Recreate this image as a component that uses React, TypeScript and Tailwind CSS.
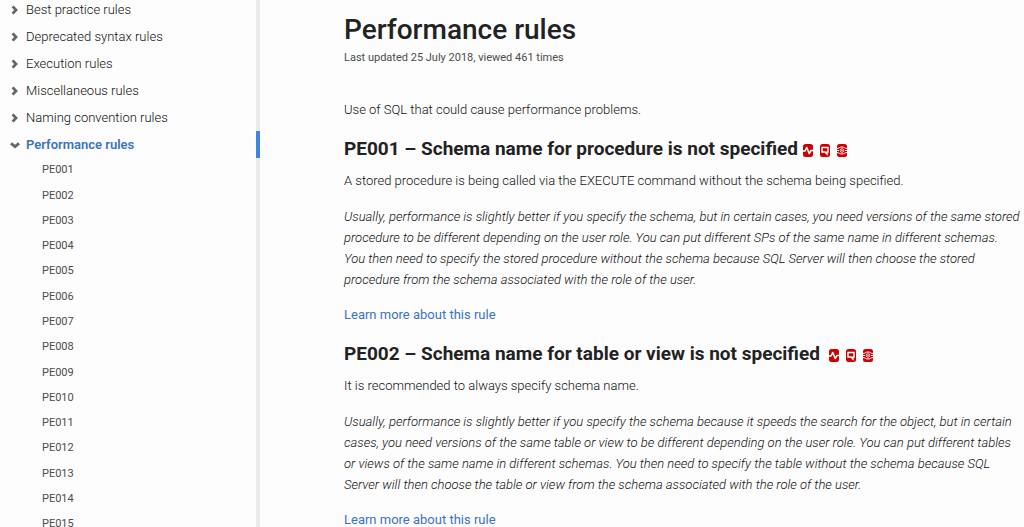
import React from 'react';

const collapsedGroups = [
  'Best practice rules',
  'Deprecated syntax rules',
  'Execution rules',
  'Miscellaneous rules',
  'Naming convention rules',
];

const ruleCodes = Array.from({ length: 15 }, (_, i) => 'PE' + String(i + 1).padStart(3, '0'));

const rules = [
  {
    title: 'PE001 – Schema name for procedure is not specified',
    summary: 'A stored procedure is being called via the EXECUTE command without the schema being specified.',
    detail:
      'Usually, performance is slightly better if you specify the schema, but in certain cases, you need versions of the same stored procedure to be different depending on the user role. You can put different SPs of the same name in different schemas. You then need to specify the stored procedure without the schema because SQL Server will then choose the stored procedure from the schema associated with the role of the user.',
    gap: 'ml-[5px]',
  },
  {
    title: 'PE002 – Schema name for table or view is not specified',
    summary: 'It is recommended to always specify schema name.',
    detail:
      'Usually, performance is slightly better if you specify the schema because it speeds the search for the object, but in certain cases, you need versions of the same table or view to be different depending on the user role. You can put different tables or views of the same name in different schemas. You then need to specify the table without the schema because SQL Server will then choose the table or view from the schema associated with the role of the user.',
    gap: 'ml-[9px]',
  },
];

function Chevron({ open }: { open?: boolean }) {
  return (
    <svg
      viewBox="0 0 10 10"
      className={open ? 'size-2.5 shrink-0 rotate-90' : 'size-2.5 shrink-0'}
      fill="none"
      stroke="#666"
      strokeWidth="2.8"
      aria-hidden="true"
    >
      <path d={open ? 'M3.4 1 6.6 5 3.4 9' : 'M2.6 1.4 6 5 2.6 8.6'} />
    </svg>
  );
}

function Tile({ children }: { children: React.ReactNode }) {
  return (
    <svg viewBox="0 0 20 26" className="h-[13px] w-2.5" fill="none" stroke="#fff" aria-hidden="true">
      <rect width="20" height="26" rx="5" fill="#cc0000" stroke="none" />
      {children}
    </svg>
  );
}

function ProductIcons() {
  return (
    <>
      <Tile>
        <path d="M0 14h4L7.5 7l5 12 3.5-6h4" strokeWidth="3.2" strokeLinejoin="round" />
      </Tile>
      <Tile>
        <path d="M4 7h12v9h-2v4l-4-4H4z" strokeWidth="2.8" />
      </Tile>
      <Tile>
        <path d="M0 9c4 0 5-3 10-3s6 3 10 3M0 17c4 0 5 3 10 3s6-3 10-3" strokeWidth="2" />
        <circle cx="10" cy="13" r="3.6" strokeWidth="1.6" />
        <path d="M0 13h4M16 13h4" strokeWidth="1.8" />
        <circle cx="10" cy="13" r="1.4" fill="#fff" stroke="none" />
      </Tile>
    </>
  );
}

export default function App() {
  return (
    <div className="flex h-screen overflow-hidden bg-[#fdfdfd] font-[Roboto,sans-serif] text-[13px] font-light text-[#111]">
      <nav aria-label="Rules" className="w-[260px] shrink-0 overflow-hidden">
        <div className="-mt-1">
          {collapsedGroups.map((name) => (
            <a
              key={name}
              href="#"
              className="flex h-[27px] items-center gap-1.5 border-r-4 border-[#ebebeb] pl-2.5"
            >
              <Chevron />
              {name}
            </a>
          ))}
          <a
            href="#"
            aria-current="page"
            className="flex h-[27px] items-center gap-1.5 border-r-4 border-[#3d85dd] pl-2.5 font-semibold text-[#3b73c1]"
          >
            <Chevron open />
            Performance rules
          </a>
          <ul className="grid h-[379px] auto-rows-fr border-r-4 border-[#ebebeb] text-[11px] font-normal text-[#4c4c4c]">
            {ruleCodes.map((code) => (
              <li key={code} className="flex items-center pl-[42px]">
                <a href="#">{code}</a>
              </li>
            ))}
          </ul>
        </div>
      </nav>
      <main className="min-w-0 flex-1 pt-3 pr-[3px] pl-[84px] leading-[21px]">
        <h1 className="text-[28px] leading-9 font-medium text-[#222]">Performance rules</h1>
        <p className="text-[11px] leading-5 font-normal text-[#4c4c4c]">
          Last updated 25 July 2018, viewed 461 times
        </p>
        <p className="mt-[31px]">Use of SQL that could cause performance problems.</p>
        {rules.map((rule) => (
          <section key={rule.title} className="mt-[15px]">
            <h2 className="flex items-center text-[19px] leading-7 font-bold text-[#222]">
              {rule.title}
              <span className={'flex gap-[7px] pt-0.5 ' + rule.gap}>
                <ProductIcons />
              </span>
            </h2>
            <p className="mt-[7px]">{rule.summary}</p>
            <p className="mt-[15px] italic">{rule.detail}</p>
            <p className="mt-3.5">
              <a href="#" className="font-normal text-[#3b73c1]">
                Learn more about this rule
              </a>
            </p>
          </section>
        ))}
      </main>
    </div>
  );
}
